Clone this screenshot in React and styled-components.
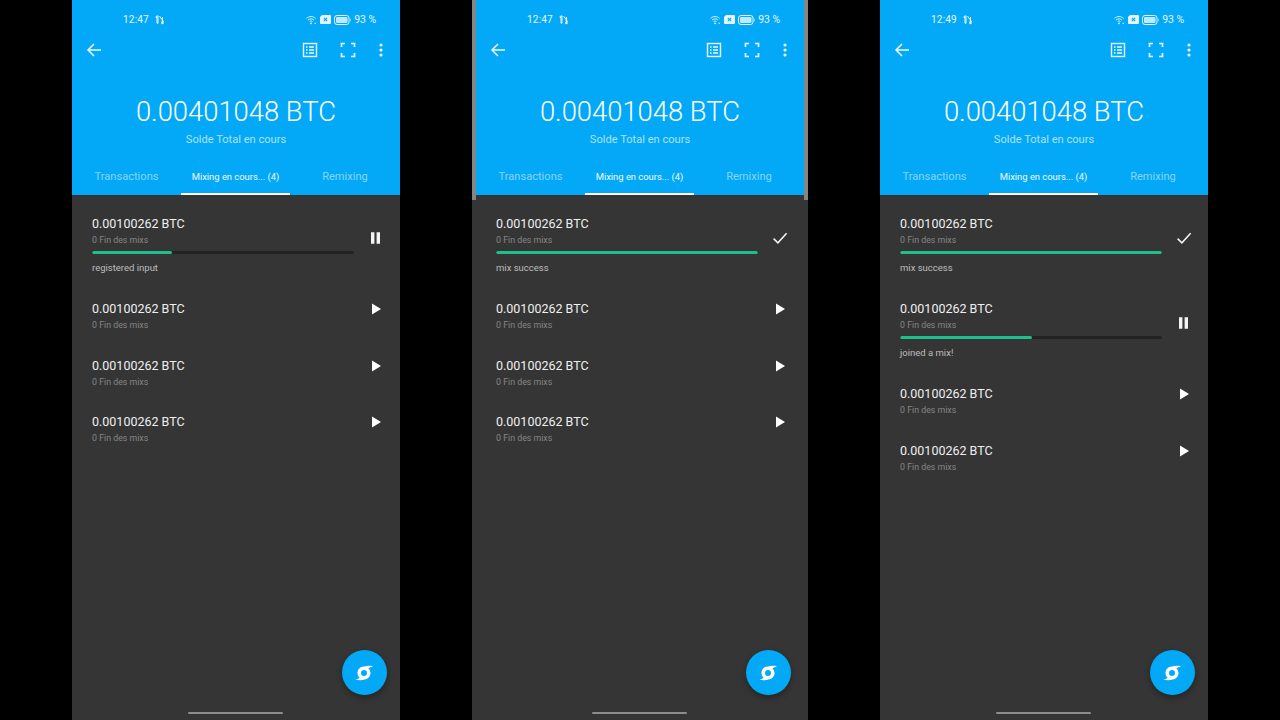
import React from "react";
import styled, { createGlobalStyle } from "styled-components";

const Global = createGlobalStyle`
  html, body { margin: 0; padding: 0; background: #000; }
  body { font-family: Roboto, "Liberation Sans", sans-serif; }
`;

const Stage = styled.div`
  width: 1280px;
  height: 720px;
  display: flex;
  justify-content: center;
  gap: 72px;
  background: #000;
  overflow: hidden;
`;

const Phone = styled.div`
  position: relative;
  width: ${(p) => (p.$framed ? 336 : 328)}px;
  height: 720px;
  box-sizing: border-box;
  padding: 0 ${(p) => (p.$framed ? 4 : 0)}px;
  background: #353535;
  display: flex;
  flex-direction: column;
  ${(p) =>
    p.$framed
      ? `
  &::before, &::after {
    content: "";
    position: absolute;
    top: 0;
    width: 4px;
    height: 200px;
    background: #858585;
  }
  &::before { left: 0; }
  &::after { right: 0; }
  `
      : ""}
`;

const Header = styled.header`
  height: 195px;
  background: #03a9f6;
  display: flex;
  flex-direction: column;
  color: #fff;
`;

const StatusBar = styled.div`
  height: 38px;
  box-sizing: border-box;
  display: flex;
  align-items: center;
  padding: 1px 24px 0 51px;
  font-size: 10px;
  color: #e6f6fe;
`;
const Time = styled.span`
  letter-spacing: 0.2px;
`;
const SimIcon = styled.svg`
  margin-left: 6px;
  width: 10px;
  height: 10px;
`;
const StatusRight = styled.div`
  margin-left: auto;
  display: flex;
  align-items: center;
  gap: 3px;
`;
const Battery = styled.span`
  font-size: 10.4px;
`;

const Toolbar = styled.div`
  height: 24px;
  display: flex;
  align-items: center;
  padding: 0 14px 0 10px;
`;
const Actions = styled.div`
  margin-left: auto;
  display: flex;
  align-items: center;
  gap: 14px;
`;
const ActionIcon = styled.svg`
  width: 24px;
  height: 24px;
  display: block;
`;
const MenuIcon = styled.svg`
  width: 10px;
  height: 24px;
  margin-left: 2px;
  display: block;
`;

const Total = styled.div`
  margin-top: 34px;
  font-size: 27.4px;
  line-height: 32px;
  font-weight: 300;
  text-align: center;
`;
const Caption = styled.div`
  margin-top: 5px;
  font-size: 11.1px;
  line-height: 14px;
  text-align: center;
  color: rgba(255, 255, 255, 0.68);
`;
const Tabs = styled.nav`
  margin-top: 12px;
  height: 36px;
  display: grid;
  grid-template-columns: 109px 109px 1fr;
`;
const Tab = styled.div`
  display: flex;
  align-items: center;
  justify-content: center;
  box-sizing: border-box;
  font-size: ${(p) => (p.$active ? 9.4 : 11.1)}px;
  color: ${(p) => (p.$active ? "#f2fbff" : "rgba(255,255,255,0.52)")};
  border-bottom: 2px solid ${(p) => (p.$active ? "#fff" : "transparent")};
`;

const List = styled.main`
  padding-top: 21px;
  display: flex;
  flex-direction: column;
  gap: 26.6px;
`;
const Row = styled.div`
  display: flex;
  align-items: flex-start;
  gap: 11px;
  padding: 0 13.5px 0 20px;
`;
const Body = styled.div`
  flex: 1;
  min-width: 0;
`;
const Amount = styled.div`
  font-size: 12.5px;
  line-height: 16px;
  color: #f0f0f0;
`;
const Sub = styled.div`
  margin-top: 2px;
  font-size: 8.8px;
  line-height: 12px;
  color: #858585;
`;
const Track = styled.div`
  margin-top: 5px;
  height: 3px;
  border-radius: 2px;
  background: #222;
  overflow: hidden;
`;
const Fill = styled.div`
  height: 100%;
  border-radius: 2px;
  background: #1dbf8c;
`;
const StateText = styled.div`
  margin-top: 8px;
  font-size: 9.5px;
  line-height: 12.4px;
  color: #bdbdbd;
`;
const Slot = styled.div`
  width: 22px;
  height: 16px;
  margin-top: ${(p) => (p.$active ? 14 : 0)}px;
  display: flex;
  align-items: center;
  justify-content: center;
`;
const RowIcon = styled.svg`
  width: 18px;
  height: 18px;
  flex: none;
`;

const Fab = styled.button`
  position: absolute;
  right: ${(p) => (p.$framed ? 17.5 : 13.5)}px;
  bottom: 25px;
  width: 45px;
  height: 45px;
  padding: 0;
  border: 0;
  border-radius: 50%;
  background: #03a9f6;
  box-shadow: 0 3px 6px rgba(0, 0, 0, 0.3);
  display: flex;
  align-items: center;
  justify-content: center;
`;
const FabIcon = styled.svg`
  width: 24px;
  height: 24px;
`;
const HomeBar = styled.div`
  position: absolute;
  left: 50%;
  bottom: 6px;
  width: 95px;
  height: 2px;
  margin-left: -48px;
  border-radius: 1px;
  background: #8c8c8c;
`;

const Play = () => (
  <RowIcon viewBox="0 0 18 18">
    <path d="M5 3.6 14 9l-9 5.400z" fill="#fff" />
  </RowIcon>
);
const Pause = () => (
  <RowIcon viewBox="0 0 18 18">
    <path d="M4 3.200h3.400v11.600H4zM9.600 3.200H13v11.600H9.600z" fill="#f4f4f4" />
  </RowIcon>
);
const Check = () => (
  <RowIcon viewBox="0 0 18 18">
    <path d="M2.600 9.600 6.900 13.800 15.600 4.200" fill="none" stroke="#f4f4f4" strokeWidth="1.500" />
  </RowIcon>
);

const Item = ({ pct, text, icon }) => {
  const expanded = pct !== undefined;
  return (
    <Row>
      <Body>
        <Amount>0.00100262 BTC</Amount>
        <Sub>0 Fin des mixs</Sub>
        {expanded && (
          <>
            <Track>
              <Fill style={{ width: `${pct}%` }} />
            </Track>
            <StateText>{text}</StateText>
          </>
        )}
      </Body>
      <Slot $active={expanded}>{icon}</Slot>
    </Row>
  );
};

const Screen = ({ time, framed, items }) => (
  <Phone $framed={framed}>
    <Header>
      <StatusBar>
        <Time>{time}</Time>
        <SimIcon viewBox="0 0 10 10">
          <path d="M1 1.500 3 .8v7.400H2V2.200l-1 .4zM4.500 1l2 3 .6-1v3.500M7.500 2v5l1.500-1.200" fill="none" stroke="#eaf8ff" strokeWidth="1" />
          <circle cx="7.400" cy="8" r="1.300" fill="#eaf8ff" />
        </SimIcon>
        <StatusRight>
          <svg width="11" height="10" viewBox="0 0 12 10">
            <path d="M.5 3.200C3.500.6 7.500.6 10.500 3.200M2.200 5C4.200 3.400 6.800 3.400 8.800 5M3.900 6.700C5 5.900 6 5.900 7.100 6.700" fill="none" stroke="#dff5ff" strokeWidth="1" />
            <circle cx="5.500" cy="8.600" r="1" fill="#dff5ff" />
            <circle cx="10" cy="8.600" r=".8" fill="#dff5ff" />
          </svg>
          <svg width="11" height="9" viewBox="0 0 11 9">
            <path d="M2 0h8a1 1 0 0 1 1 1v7a1 1 0 0 1-1 1H1a1 1 0 0 1-1-1V2z" fill="#e4f6ff" />
            <path d="M3.800 3 7.200 6.200M7.200 3 3.800 6.200" stroke="#03a9f6" strokeWidth="1.100" />
          </svg>
          <svg width="17" height="10" viewBox="0 0 17 10">
            <rect x=".5" y=".5" width="14.500" height="9" rx="2.500" fill="none" stroke="#e4f6ff" />
            <rect x="2" y="2" width="11.500" height="6" rx="1.200" fill="#bfeaff" />
            <path d="M16 3.200c.8.4.8 3.200 0 3.600z" fill="#e4f6ff" />
          </svg>
          <Battery>93 %</Battery>
        </StatusRight>
      </StatusBar>
      <Toolbar>
        <ActionIcon viewBox="0 0 24 24">
          <path d="M19 12H6.500M12 6 6 12l6 6" fill="none" stroke="#eef9ff" strokeWidth="1.500" />
        </ActionIcon>
        <Actions>
          <ActionIcon viewBox="0 0 24 24">
            <rect x="5.500" y="5.500" width="13" height="13" fill="none" stroke="#eef9ff" strokeWidth="1.400" />
            <path d="M8 9h1.500M8 12h1.500M8 15h1.500M11 9h5M11 12h5M11 15h5" stroke="#eef9ff" strokeWidth="1.300" />
          </ActionIcon>
          <ActionIcon viewBox="0 0 24 24">
            <path d="M5.500 9V5.500H9M15 5.500h3.500V9M18.500 15v3.500H15M9 18.500H5.500V15" fill="none" stroke="#eef9ff" strokeWidth="1.700" />
          </ActionIcon>
          <MenuIcon viewBox="0 0 10 24">
            <g fill="#eef9ff">
              <circle cx="5" cy="7" r="1.600" />
              <circle cx="5" cy="12" r="1.600" />
              <circle cx="5" cy="17" r="1.600" />
            </g>
          </MenuIcon>
        </Actions>
      </Toolbar>
      <Total>0.00401048 BTC</Total>
      <Caption>Solde Total en cours</Caption>
      <Tabs>
        <Tab>Transactions</Tab>
        <Tab $active>Mixing en cours... (4)</Tab>
        <Tab>Remixing</Tab>
      </Tabs>
    </Header>
    <List>{items.map((it, i) => <Item key={i} {...it} />)}</List>
    <Fab $framed={framed} aria-label="mix">
      <FabIcon viewBox="0 0 24 24">
        <path
          fill="#fff"
          fillRule="evenodd"
          d="M20.500 5.200C18 4.600 15 4.700 12 5.500 8 5.500 5.500 8.500 5.500 12c0 2 .9 3.600 2.100 4.700-1 1-2.300 1.500-4.100 1.300 3 1.600 6 1.400 9 .5 3.300-.2 6-3 6-6.500 0-1.900-.8-3.400-2-4.600 1.300-1 2.500-1.500 4-1.700zM12 9a3 3 0 1 0 0 6 3 3 0 0 0 0-6z"
        />
      </FabIcon>
    </Fab>
    <HomeBar />
  </Phone>
);

const idle = { icon: <Play /> };

export default function App() {
  return (
    <>
      <Global />
      <Stage>
        <Screen
          time="12:47"
          items={[{ pct: 30.5, text: "registered input", icon: <Pause /> }, idle, idle, idle]}
        />
        <Screen
          framed
          time="12:47"
          items={[{ pct: 100, text: "mix success", icon: <Check /> }, idle, idle, idle]}
        />
        <Screen
          time="12:49"
          items={[
            { pct: 100, text: "mix success", icon: <Check /> },
            { pct: 50.5, text: "joined a mix!", icon: <Pause /> },
            idle,
            idle,
          ]}
        />
      </Stage>
    </>
  );
}
